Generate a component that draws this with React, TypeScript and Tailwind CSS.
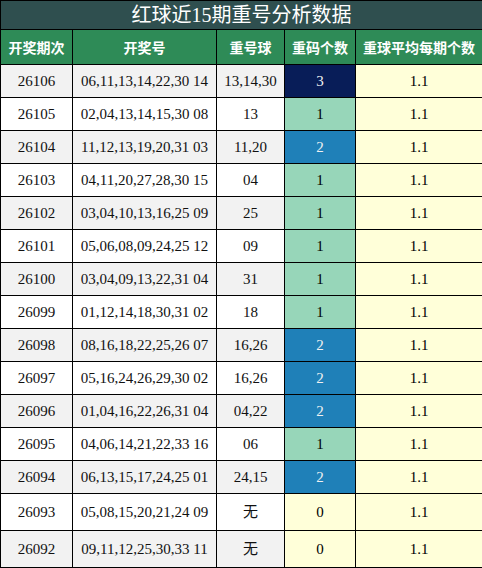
import React from 'react';

type Row = { issue: string; nums: string; repeat: string; count: number };

const rows: Row[] = [
  { issue: '26106', nums: '06,11,13,14,22,30 14', repeat: '13,14,30', count: 3 },
  { issue: '26105', nums: '02,04,13,14,15,30 08', repeat: '13', count: 1 },
  { issue: '26104', nums: '11,12,13,19,20,31 03', repeat: '11,20', count: 2 },
  { issue: '26103', nums: '04,11,20,27,28,30 15', repeat: '04', count: 1 },
  { issue: '26102', nums: '03,04,10,13,16,25 09', repeat: '25', count: 1 },
  { issue: '26101', nums: '05,06,08,09,24,25 12', repeat: '09', count: 1 },
  { issue: '26100', nums: '03,04,09,13,22,31 04', repeat: '31', count: 1 },
  { issue: '26099', nums: '01,12,14,18,30,31 02', repeat: '18', count: 1 },
  { issue: '26098', nums: '08,16,18,22,25,26 07', repeat: '16,26', count: 2 },
  { issue: '26097', nums: '05,16,24,26,29,30 02', repeat: '16,26', count: 2 },
  { issue: '26096', nums: '01,04,16,22,26,31 04', repeat: '04,22', count: 2 },
  { issue: '26095', nums: '04,06,14,21,22,33 16', repeat: '06', count: 1 },
  { issue: '26094', nums: '06,13,15,17,24,25 01', repeat: '24,15', count: 2 },
  { issue: '26093', nums: '05,08,15,20,21,24 09', repeat: '无', count: 0 },
  { issue: '26092', nums: '09,11,12,25,30,33 11', repeat: '无', count: 0 },
];

// YlGnBu-style shading for the repeat count
const countCls: Record<number, string> = {
  0: 'bg-[#ffffd9] text-black',
  1: 'bg-[#97d6b9] text-black',
  2: 'bg-[#1f80b8] text-[#f1f1f1]',
  3: 'bg-[#081d58] text-[#f1f1f1]',
};

const headers = ['开奖期次', '开奖号', '重号球', '重码个数', '重球平均每期个数'];

export default function App() {
  return (
    <div className="w-[482px] h-[568px] bg-white font-['Liberation_Serif','Noto_Sans_CJK_SC',serif]">
      <table className="w-[482px] table-fixed border-collapse border border-black text-center">
        <colgroup>
          <col className="w-[72px]" />
          <col className="w-[144px]" />
          <col className="w-[68px]" />
          <col className="w-[71px]" />
          <col className="w-[127px]" />
        </colgroup>
        <thead>
          <tr>
            <th
              colSpan={5}
              className="border border-black bg-[#2f4f4f] text-white text-[20px] leading-[28px] font-normal p-0"
            >
              红球近15期重号分析数据
            </th>
          </tr>
          <tr>
            {headers.map((h) => (
              <th
                key={h}
                className="border border-black bg-[#2e8b57] text-white text-[14px] font-bold leading-[20px] py-[7px] px-0 font-['Noto_Sans_CJK_SC',sans-serif]"
              >
                {h}
              </th>
            ))}
          </tr>
        </thead>
        <tbody className="text-[15px] text-[#111]">
          {rows.map((r, i) => {
            const base = i % 2 === 0 ? 'bg-[#f2f2f2]' : 'bg-white';
            const lh = r.repeat === '无' ? 'leading-[22px]' : 'leading-[18px]';
            return (
              <tr key={r.issue}>
                <td className={`border border-black py-[7px] px-0 ${lh} ${base}`}>{r.issue}</td>
                <td className={`border border-black py-[7px] px-0 ${lh} ${base}`}>{r.nums}</td>
                <td className={`border border-black py-[7px] px-0 ${lh} ${base}`}>{r.repeat}</td>
                <td className={`border border-black py-[7px] px-0 ${lh} ${countCls[r.count]}`}>{r.count}</td>
                <td className={`border border-black py-[7px] px-0 ${lh} bg-[#ffffd9] text-black`}>1.1</td>
              </tr>
            );
          })}
        </tbody>
      </table>
    </div>
  );
}
